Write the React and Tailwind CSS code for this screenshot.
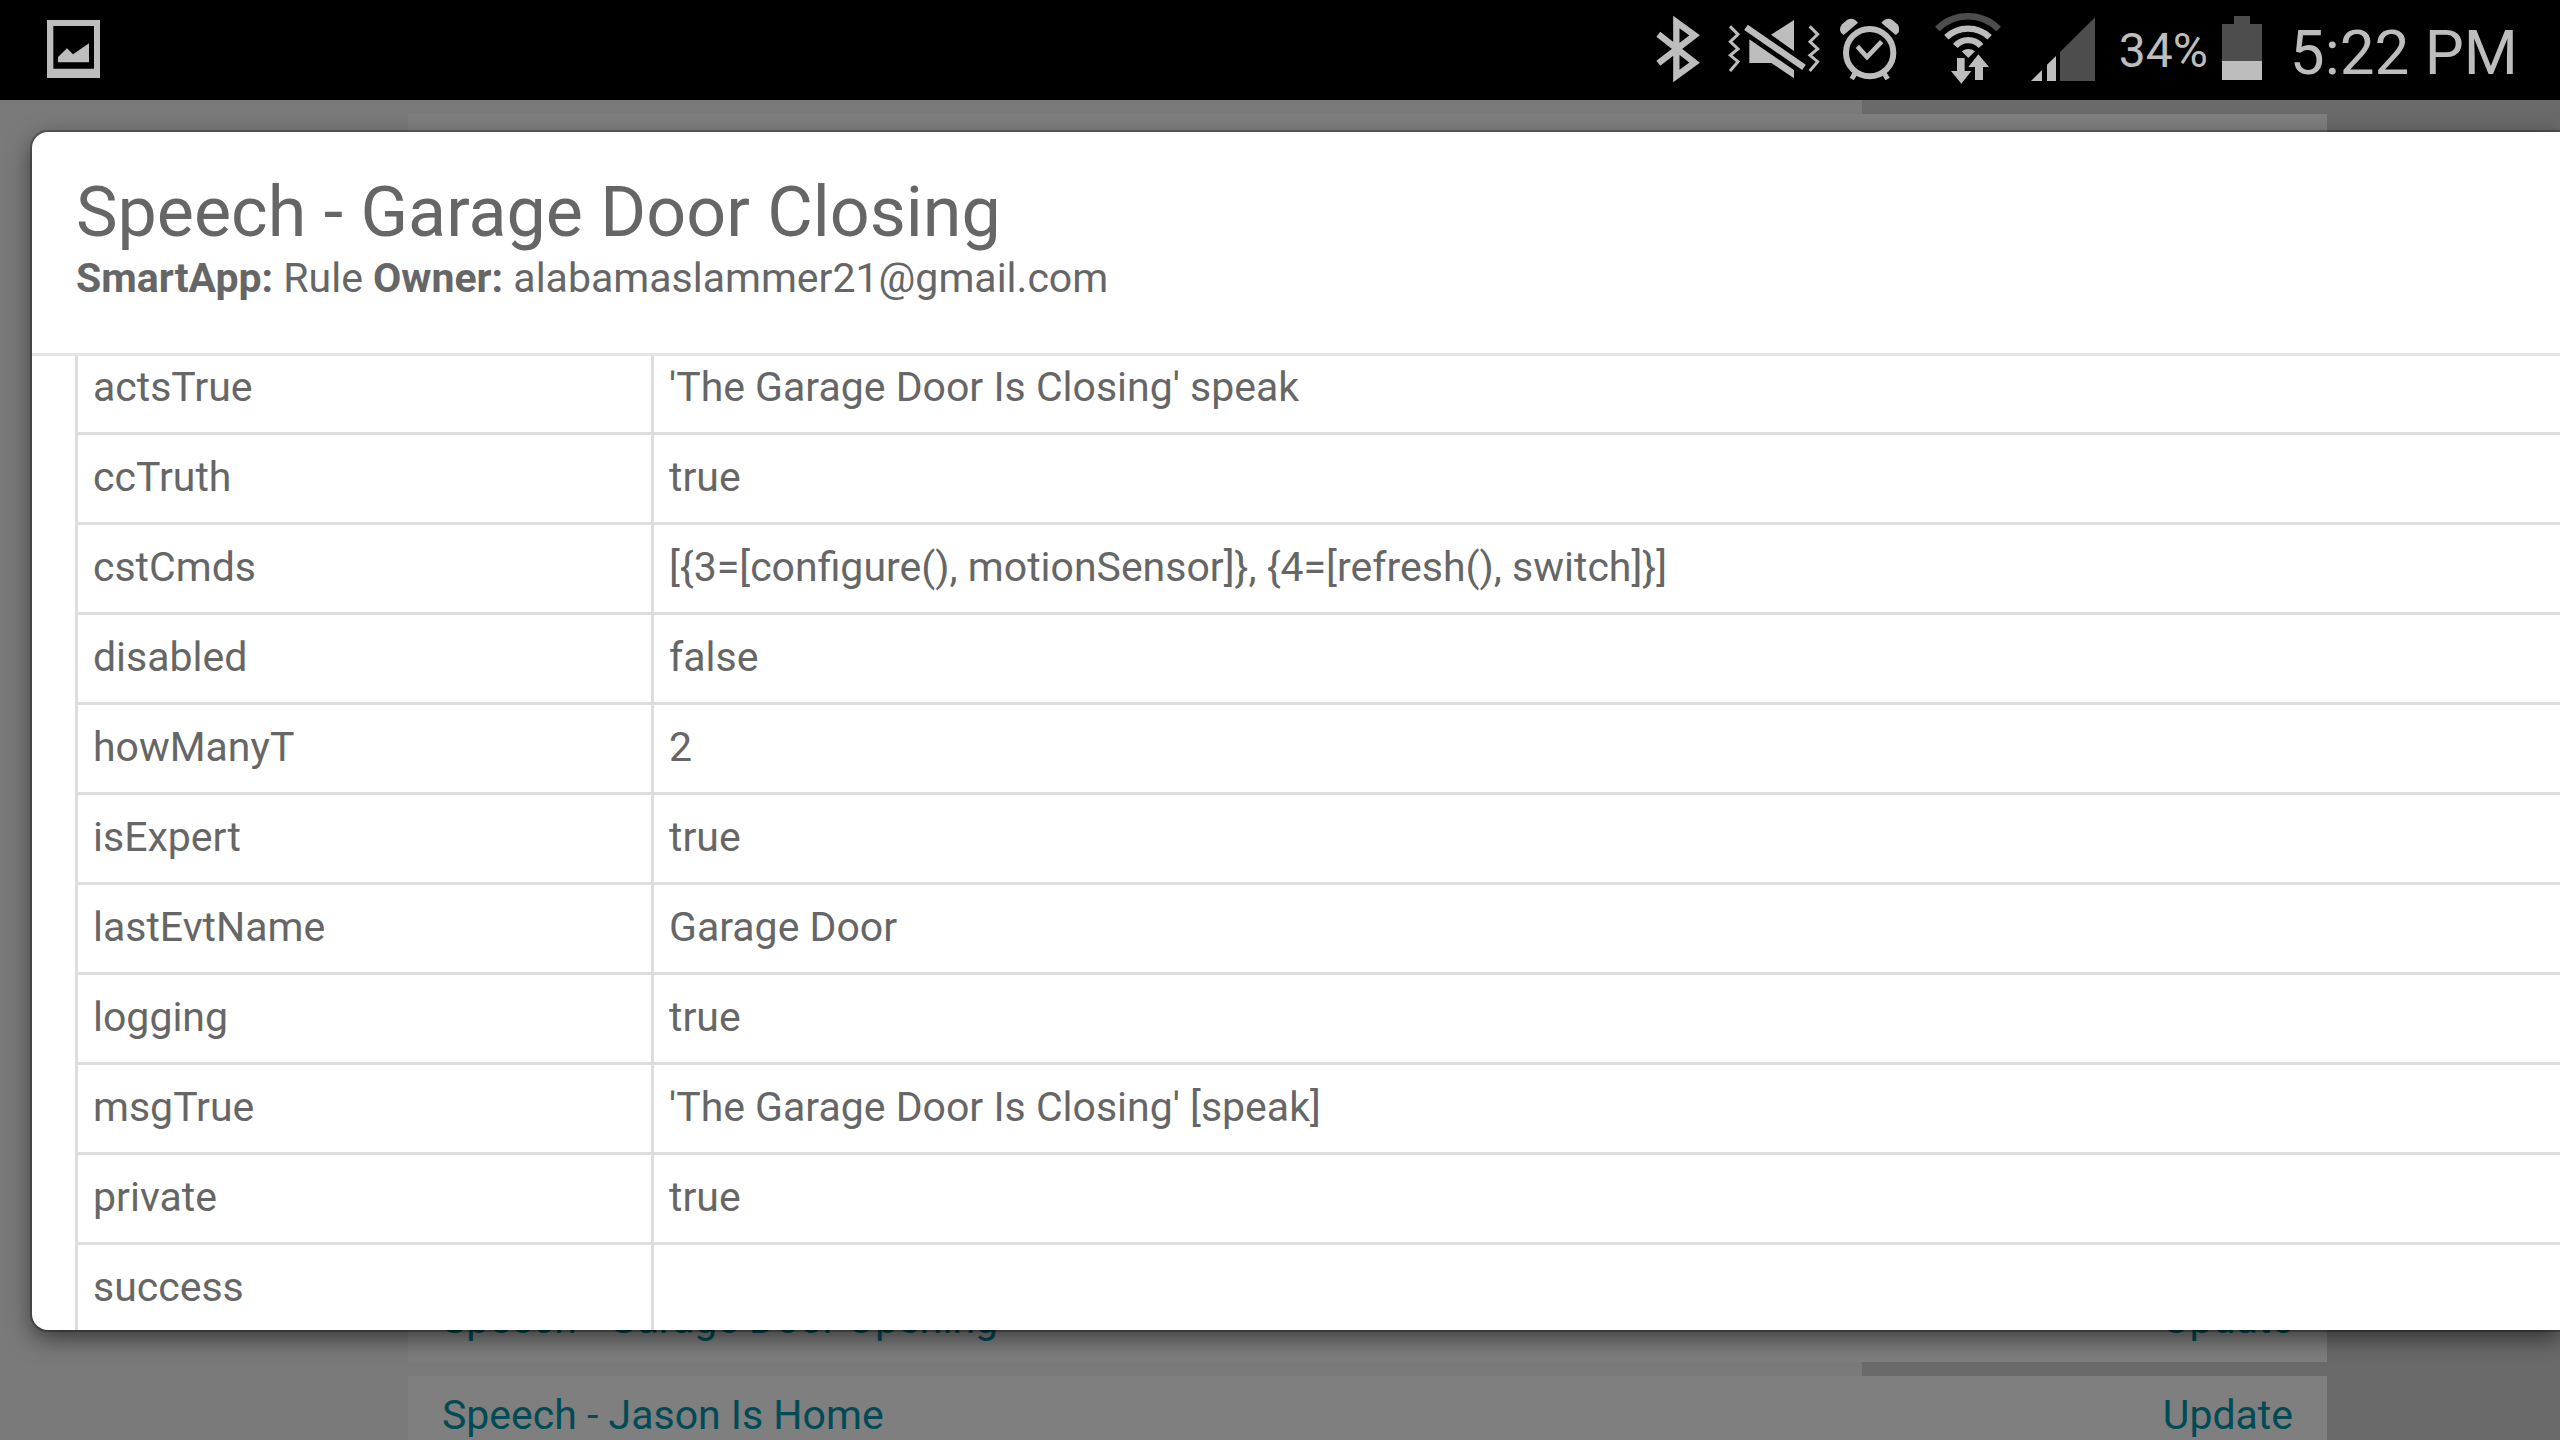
const stateRows = [
  { name: "actsTrue", value: "'The Garage Door Is Closing' speak" },
  { name: "ccTruth", value: "true" },
  { name: "cstCmds", value: "[{3=[configure(), motionSensor]}, {4=[refresh(), switch]}]" },
  { name: "disabled", value: "false" },
  { name: "howManyT", value: "2" },
  { name: "isExpert", value: "true" },
  { name: "lastEvtName", value: "Garage Door" },
  { name: "logging", value: "true" },
  { name: "msgTrue", value: "'The Garage Door Is Closing' [speak]" },
  { name: "private", value: "true" },
  { name: "success", value: "" },
];

const apps = ["Speech - Garage Door Opening", "Speech - Jason Is Home"];

const PictureIcon = () => (
  <svg className="w-[53px] h-[70px]" viewBox="141 45 159 210" fill="#bdbdbd">
    <path fillRule="evenodd" d="M141 60H300V234H141ZM160 78V206H282V78Z" />
    <path d="M174 187V171L201 145L219 163L267 130V187Z" />
  </svg>
);

const BluetoothIcon = () => (
  <svg className="w-[44px] h-[70px]" viewBox="75 45 132 210" fill="none" stroke="#bdbdbd" strokeWidth="19">
    <path d="M82 103L191 188L136 228V66L191 106L82 190" />
  </svg>
);

const VibrateIcon = () => (
  <svg className="w-[92px] h-[70px]" viewBox="291 45 276 210" fill="#bdbdbd">
    <path d="M420 104L489 60V153Z" />
    <path d="M355 118L489 210V235L421 189H355Z" />
    <g fill="none" stroke="#bdbdbd">
      <path strokeWidth="19" d="M345 82L519 202" />
      <path strokeWidth="9" d="M297 79L321 103L298 125L321 147L298 166L321 185L297 213" />
      <path strokeWidth="9" d="M536 79L560 103L537 125L560 147L537 166L560 185L536 213" />
    </g>
  </svg>
);

const AlarmIcon = () => (
  <svg className="w-[59px] h-[70px]" viewBox="630 45 177 210" fill="#bdbdbd">
    <path d="M641 105L684 68Q668 49 651 60L636 73Q626 86 633 98Z" />
    <path d="M797 105L754 68Q770 49 787 60L802 73Q812 86 805 98Z" />
    <g fill="none" stroke="#bdbdbd">
      <circle cx="719" cy="158" r="71" strokeWidth="18" />
      <path strokeWidth="14" d="M682 139L711 171L755 125" />
      <path strokeWidth="15" d="M677 218L665 237M761 218L773 237" />
    </g>
  </svg>
);

const WifiIcon = () => (
  <svg className="w-[66px] h-[74px]" viewBox="918 39 198 222" fill="#bdbdbd">
    <g fill="none" stroke="#bdbdbd" strokeWidth="19">
      <path stroke="#4d4d4d" d="M925 87A130 130 0 0 1 1109 87" />
      <path d="M952 112A94 94 0 0 1 1082 112" />
      <path d="M979 138A51 51 0 0 1 1056 138" />
    </g>
    <path d="M998 154Q1018 140 1038 154L1018 174Z" />
    <path d="M984 174H1007V213H1027L997 251L966 213H984Z" />
    <path d="M1038 240V201H1018L1048 163L1080 201H1062V240Z" />
  </svg>
);

const SignalIcon = () => (
  <svg className="w-[64px] h-[70px]" viewBox="1206 45 192 210" fill="#bdbdbd">
    <path d="M1206 243L1239 210V243Z" />
    <path d="M1254 243V194L1281 168V243Z" />
    <path fill="#4d4d4d" d="M1293 243V156L1398 52V243Z" />
  </svg>
);

const BatteryIcon = () => (
  <svg className="w-[40px] h-[70px]" viewBox="0 15 40 70">
    <path fill="#4d4d4d" d="M12 16H28V24H40V61H0V24H12Z" />
    <path fill="#bdbdbd" d="M0 61H40V80H0Z" />
  </svg>
);

const StatusBar = () => (
  <header className="flex h-[100px] shrink-0 items-center justify-between bg-black pl-[47px] pr-[42px] text-[#bdbdbd]">
    <PictureIcon />
    <div className="flex items-center">
      <div className="mr-6 flex items-center gap-7">
        <BluetoothIcon />
        <div className="flex items-center gap-5">
          <VibrateIcon />
          <AlarmIcon />
        </div>
        <div className="ml-2 flex items-center gap-[30px]">
          <WifiIcon />
          <SignalIcon />
        </div>
      </div>
      <span className="mr-[14px] pt-0.5 text-[48px] leading-[70px]">34%</span>
      <BatteryIcon />
      <span className="ml-7 pt-1.5 text-[62px] leading-[70px]">5:22 PM</span>
    </div>
  </header>
);

const AppList = () => (
  <div className="h-full w-[calc(100%-698px)] bg-[#f5f5f5]">
    <ul className="ml-[408px] -mr-[465px] flex h-[calc(100%+18px)] flex-col gap-[14px] pt-[14px]">
      <li className="flex-1 bg-white"></li>
      {apps.map((name) => (
        <li
          key={name}
          className="flex justify-between bg-white px-[34px] pt-[17px] pb-[21px] leading-[44px] text-[#0096aa]"
        >
          <a href="#">{name}</a>
          <button type="button">Update</button>
        </li>
      ))}
    </ul>
  </div>
);

const StateDialog = () => (
  <section
    role="dialog"
    aria-labelledby="dialog-title"
    className="flex h-full flex-col overflow-hidden rounded-l-2xl bg-white text-[#666] shadow-[0_0_0_2px_rgba(0,0,0,0.25),0_8px_24px_rgba(0,0,0,0.55)]"
  >
    <div className="border-b-[3px] border-[#e5e5e5] px-11 pt-[38px] pb-[51px]">
      <h1 id="dialog-title" className="text-[70px] leading-[84px]">
        Speech - Garage Door Closing
      </h1>
      <p className="leading-[48px]">
        <b>SmartApp:</b> Rule <b>Owner:</b> alabamaslammer21@gmail.com
      </p>
    </div>
    <div className="min-h-0 flex-1 overflow-hidden">
      <table className="ml-[43px] -mt-[14px] w-full table-fixed border-collapse text-left leading-[50px]">
        <tbody>
          {stateRows.map((row) => (
            <tr key={row.name}>
              <th scope="row" className="w-[576px] border-[3px] border-[#ddd] px-[15px] pt-[17px] pb-5 font-normal">
                {row.name}
              </th>
              <td className="border-[3px] border-[#ddd] px-[15px] pt-[17px] pb-5">{row.value}</td>
            </tr>
          ))}
        </tbody>
      </table>
    </div>
  </section>
);

const App = () => {
  return (
    <div className="flex h-screen flex-col overflow-hidden font-['Roboto',sans-serif] text-[41px]">
      <StatusBar />
      <main className="relative min-h-0 flex-1 overflow-hidden bg-[#d5d5d5]">
        <AppList />
        <div className="absolute inset-0 bg-black/50 pt-8 pb-[110px] pl-8">
          <StateDialog />
        </div>
      </main>
    </div>
  );
};

export default App;
